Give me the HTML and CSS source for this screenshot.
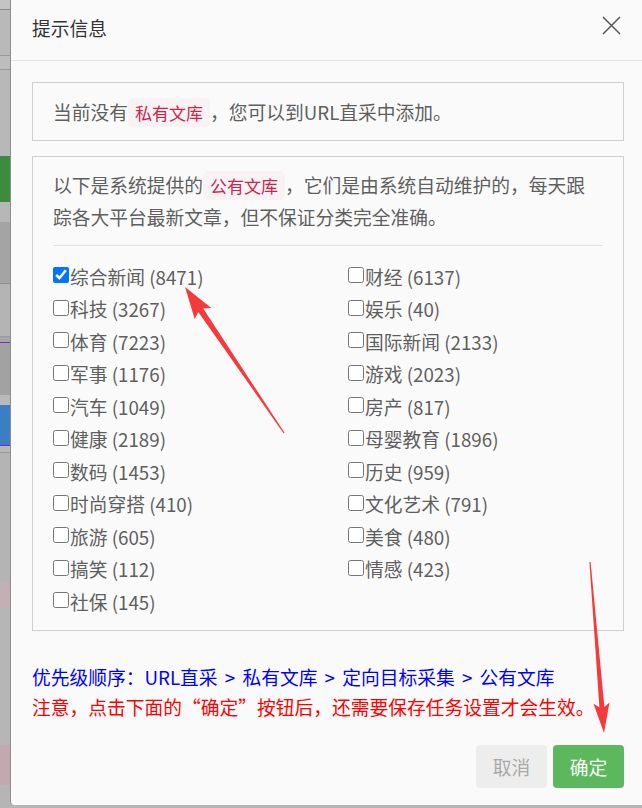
FILE: index.html
```html
<!DOCTYPE html>
<html>
  <head>
    <meta charset="utf-8">
    <link rel="stylesheet" href="styles.css">
  </head>
  <body>
    <div class="page">
      <div class="backdrop"></div>

      <div class="modal">
        <div class="modal-header">
          <h4 class="modal-title">提示信息</h4>
          <button class="close" type="button">
            <svg width="19" height="19" viewBox="0 0 19 19">
              <path d="M1 1 L18 18 M18 1 L1 18" stroke="#555" stroke-width="1.5" fill="none" />
            </svg>
          </button>
        </div>

        <div class="modal-body">
          <div class="panel panel-private">
            当前没有<code>私有文库</code>，您可以到URL直采中添加。
          </div>

          <div class="panel panel-public">
            <p class="intro">以下是系统提供的<code>公有文库</code>，它们是由系统自动维护的，每天跟踪各大平台最新文章，但不保证分类完全准确。</p>
            <hr>
            <div class="lib-list">
              <label class="lib"><input type="checkbox" checked>综合新闻 (8471)</label>
              <label class="lib"><input type="checkbox">财经 (6137)</label>
              <label class="lib"><input type="checkbox">科技 (3267)</label>
              <label class="lib"><input type="checkbox">娱乐 (40)</label>
              <label class="lib"><input type="checkbox">体育 (7223)</label>
              <label class="lib"><input type="checkbox">国际新闻 (2133)</label>
              <label class="lib"><input type="checkbox">军事 (1176)</label>
              <label class="lib"><input type="checkbox">游戏 (2023)</label>
              <label class="lib"><input type="checkbox">汽车 (1049)</label>
              <label class="lib"><input type="checkbox">房产 (817)</label>
              <label class="lib"><input type="checkbox">健康 (2189)</label>
              <label class="lib"><input type="checkbox">母婴教育 (1896)</label>
              <label class="lib"><input type="checkbox">数码 (1453)</label>
              <label class="lib"><input type="checkbox">历史 (959)</label>
              <label class="lib"><input type="checkbox">时尚穿搭 (410)</label>
              <label class="lib"><input type="checkbox">文化艺术 (791)</label>
              <label class="lib"><input type="checkbox">旅游 (605)</label>
              <label class="lib"><input type="checkbox">美食 (480)</label>
              <label class="lib"><input type="checkbox">搞笑 (112)</label>
              <label class="lib"><input type="checkbox">情感 (423)</label>
              <label class="lib"><input type="checkbox">社保 (145)</label>
            </div>
          </div>

          <p class="priority">优先级顺序：URL直采 &gt; 私有文库 &gt; 定向目标采集 &gt; 公有文库</p>
          <p class="warning">注意，点击下面的“确定”按钮后，还需要保存任务设置才会生效。</p>
        </div>

        <div class="modal-footer">
          <button class="btn btn-cancel" type="button">取消</button>
          <button class="btn btn-ok" type="button">确定</button>
        </div>
      </div>

      <!-- red annotation arrows drawn over the dialog -->
      <svg class="arrows" width="642" height="808" viewBox="0 0 642 808">
        <polygon fill="#f43a3a" points="185,287 211.3,307.9 203.2,308.5 284.5,432.7 283.5,433.3 198.3,311.9 194.7,319.1" />
        <polygon fill="#f43a3a" points="604,733 609.5,702.4 604.4,706.9 590.6,562 589.4,562 599.4,707.3 593.5,703.8" />
      </svg>
    </div>
  </body>
</html>
```

FILE: styles.css
```css
html,
body {
  margin: 0;
  padding: 0;
}

body {
  font-family: "Noto Sans CJK SC", "Open Sans", sans-serif;
  background-color: #b5b5b5;
  overflow: hidden;
}

.page {
  position: relative;
  display: flex;
  width: 642px;
  height: 808px;
  overflow: hidden;
}

/* the page behind the dialog, dimmed */
.backdrop {
  flex: 0 0 10px;
  height: 808px;
  background: linear-gradient(
    to bottom,
    #c4c4c4 0 9px,
    #8a8a8a 9px 10px,
    #b9b9b9 10px 55px,
    #999 55px 56px,
    #bdbdbd 56px 69px,
    #999 69px 70px,
    #b8b8b8 70px 156px,
    #3d8b3d 156px 202px,
    #b7b7b7 202px 222px,
    #a4a4a4 222px 283px,
    #8f8f8f 283px 284px,
    #b4b4b4 284px 336px,
    #999 336px 337px,
    #a6a6a6 337px 342px,
    #6f2fd0 342px 343px,
    #a2a2a2 343px 395px,
    #b9b9b9 395px 405px,
    #3c7ec2 405px 445px,
    #6f2fd0 445px 446px,
    #b7b7b7 446px 452px,
    #999 452px 453px,
    #b4b4b4 453px 583px,
    #c2b0b4 583px 608px,
    #b6b6b6 608px 745px,
    #c3a9af 745px 785px,
    #b5b5b5 785px
  );
}

.modal {
  flex: 0 0 634px;
  height: 805px;
  background-color: #fafafa;
  border-left: 1px solid #8e8e8e;
  border-bottom-left-radius: 4px;
  display: flex;
  flex-direction: column;
  color: #5f5f5f;
  font-size: 18.75px;
}

.modal-header {
  height: 60px;
  border-bottom: 1px solid #e3e3e3;
  display: flex;
  justify-content: space-between;
  align-items: flex-start;
  padding: 0 24px 0 21px;
}

.modal-title {
  margin: 0;
  padding-top: 14px;
  line-height: 28px;
  font-size: 18.75px;
  font-weight: normal;
  color: #333;
}

.close {
  margin-top: 16px;
  padding: 0;
  border: none;
  background: none;
  width: 19px;
  height: 19px;
  display: block;
}

.close svg {
  display: block;
}

.modal-body {
  padding: 21px 21px 0;
}

.panel {
  border: 1px solid #cfcfcf;
  padding: 0 20px;
}

.panel-private {
  padding-top: 14px;
  padding-bottom: 14px;
  line-height: 29px;
  margin-bottom: 15px;
}

code {
  font-family: "Noto Sans CJK SC", monospace;
  font-size: 17px;
  line-height: 1;
  color: #c7254e;
  background-color: #f9f2f4;
  border-radius: 5px;
  padding: 2px 7px;
}

.panel-public {
  padding-top: 12px;
  padding-bottom: 12px;
}

.intro {
  margin: 0;
  line-height: 32px;
}

.panel-public hr {
  margin: 12px 0 0;
  border: none;
  border-top: 1px solid #e2e2e2;
}

.lib-list {
  display: grid;
  grid-template-columns: 295px 1fr;
  padding-top: 14px;
}

.lib {
  display: flex;
  align-items: center;
  height: 32.5px;
  white-space: nowrap;
}

.lib input {
  width: 16px;
  height: 16px;
  margin: 0 1px 2px 0;
}

.priority,
.warning {
  margin: 0;
  line-height: 30px;
}

.priority {
  margin-top: 31px;
  color: #0000ff;
  word-spacing: 3px;
}

.warning {
  color: #ff0000;
}

.modal-footer {
  display: flex;
  justify-content: flex-end;
  gap: 6px;
  padding: 23.5px 21px 0;
}

.btn {
  width: 71px;
  height: 43px;
  border: none;
  border-radius: 4px;
  font-family: "Noto Sans CJK SC", sans-serif;
  font-size: 18.75px;
  padding: 0;
}

.btn-cancel {
  background-color: #ededed;
  color: #a9a9a9;
}

.btn-ok {
  background-color: #5cb85c;
  color: #fff;
}

.arrows {
  position: absolute;
  top: 0;
  left: 0;
  pointer-events: none;
}
```
